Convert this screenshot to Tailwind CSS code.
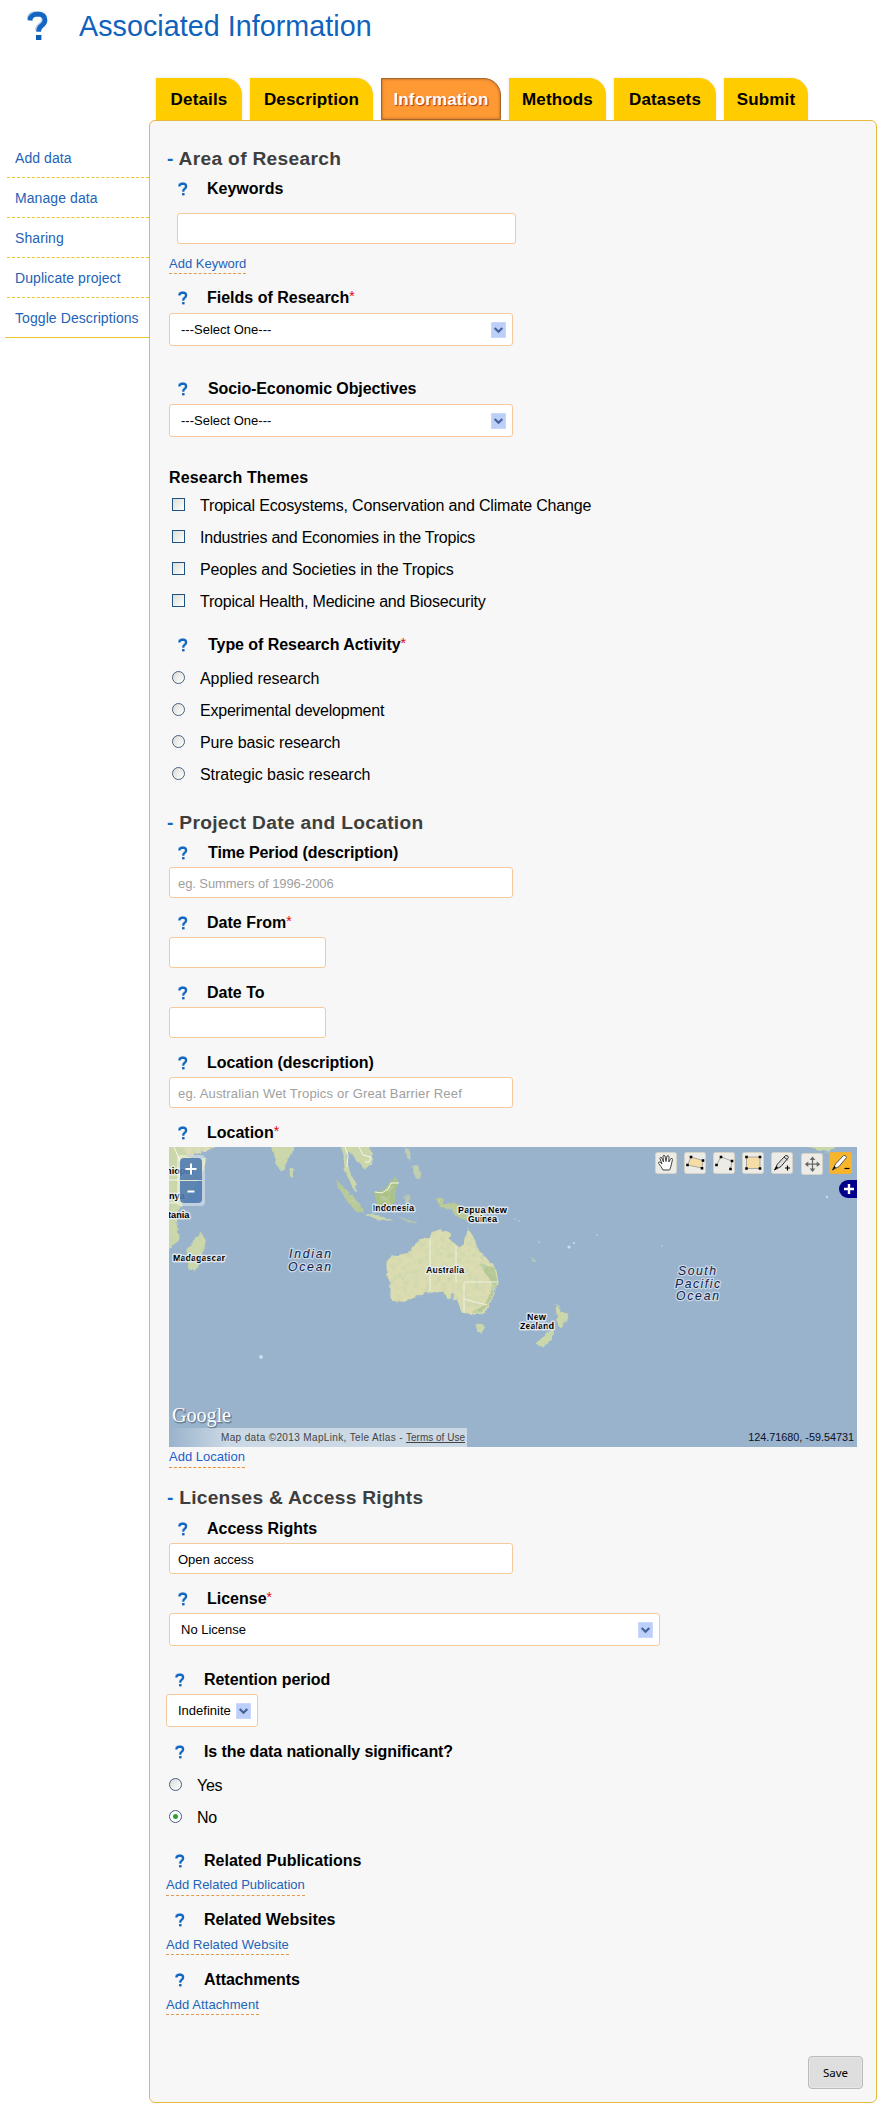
<!DOCTYPE html>
<html lang="en">
<head>
<meta charset="utf-8">
<title>Associated Information</title>
<script src="https://cdn.jsdelivr.net/npm/@tailwindcss/browser@4"></script>
</head>
<body class="bg-white font-['Liberation_Sans',Arial,sans-serif] text-base text-black">
<svg class="hidden">
  <defs>
    <symbol id="help" viewBox="0 0 22 30">
      <path d="M3 9.500 Q3.400 3.200 11 3.200 Q18 3.400 18 9 Q18 12.400 14.600 14.800 Q11.600 17 11.600 20.400" fill="none" stroke="#9fbfe0" stroke-width="4.400" transform="translate(-1.400,-1)" opacity=".7"/>
      <path d="M3 9.500 Q3.400 3.200 11 3.200 Q18 3.400 18 9 Q18 12.400 14.600 14.800 Q11.600 17 11.600 20.800" fill="none" stroke="#1466c4" stroke-width="4.800"/>
      <rect x="9" y="24" width="5.400" height="5" fill="#0f5cb5"/>
    </symbol>
    <symbol id="arrow" viewBox="0 0 15 16">
      <rect width="15" height="16" rx="1.500" fill="#bccff8"/>
      <rect x=".5" y=".5" width="14" height="15" rx="1" fill="none" stroke="#c9d8fc"/>
      <path d="M3.700 6 L7.500 9.800 L11.300 6" fill="none" stroke="#47619a" stroke-width="2.200"/>
    </symbol>
  </defs>
</svg>

<header class="flex h-[78px] items-start">
  <svg class="ml-[27px] mt-[11px] h-[30px] w-[22px]"><use href="#help"/></svg>
  <h1 class="ml-[30px] mt-[10px] text-[28.7px] leading-8 tracking-[0.04px] text-[#0f62bd]">Associated Information</h1>
</header>

<nav class="flex h-[42px] gap-2 pl-[156px] text-center text-[17px] font-bold leading-[43px] tracking-[0.15px]">
  <a class="w-[86px] rounded-tr-[17px] bg-[#ffcc00] shadow-[0_0_3px_#ddd]">Details</a>
  <a class="w-[123px] rounded-tr-[17px] bg-[#ffcc00] shadow-[0_0_3px_#ddd]">Description</a>
  <a class="w-[120px] rounded-tr-[17px] border border-[#a8652a] bg-[#ff9933] leading-[41px] text-white shadow-[inset_0_0_3px_#a8652a] [text-shadow:1px_1px_1px_#b03a10]">Information</a>
  <a class="w-[97px] rounded-tr-[17px] bg-[#ffcc00] shadow-[0_0_3px_#ddd]">Methods</a>
  <a class="w-[102px] rounded-tr-[17px] bg-[#ffcc00] shadow-[0_0_3px_#ddd]">Datasets</a>
  <a class="w-[84px] rounded-tr-[17px] bg-[#ffcc00] shadow-[0_0_3px_#ddd]">Submit</a>
</nav>

<div class="flex">
  <aside class="flex w-[149px] flex-col pl-[5px] pt-[18px] text-[14px] tracking-[0.08px] text-[#2363b8]">
    <a class="ml-0.5 h-10 border-b border-dashed border-[#ecc52e] pl-2 leading-[41px]">Add data</a>
    <a class="ml-0.5 h-10 border-b border-dashed border-[#ecc52e] pl-2 leading-[41px]">Manage data</a>
    <a class="ml-0.5 h-10 border-b border-dashed border-[#ecc52e] pl-2 leading-[41px]">Sharing</a>
    <a class="ml-0.5 h-10 border-b border-dashed border-[#ecc52e] pl-2 leading-[41px]">Duplicate project</a>
    <a class="h-10 border-b border-[#ecc52e] pl-2.5 leading-[41px]">Toggle Descriptions</a>
  </aside>

  <main class="flex h-[1983px] w-[728px] flex-col items-start rounded-[6px] border border-[#e9b93f] bg-[#f7f7f7] pl-4 pt-[26px]">
    <h2 class="ml-px h-6 text-[19.2px] font-bold leading-6 tracking-[0.3px] text-[#3e3e3e]"><span class="text-[#1565c0]">-</span> Area of Research</h2>
    <div class="mt-2 flex h-5 items-start font-bold leading-5"><svg class="ml-3 mt-[3px] h-[14px] w-[10px]"><use href="#help"/></svg><span class="ml-[19px]">Keywords</span></div>
    <div class="ml-[11px] mt-[14px] h-[31px] w-[339px] rounded-[3px] border border-[#f4ca9a] bg-white"></div>
    <a class="ml-[3px] mt-2.5 h-5 border-b border-dashed border-[#e59a4a] text-[13px] leading-[19px] text-[#2363b8]">Add Keyword</a>

    <div class="mt-[14px] flex h-5 items-start font-bold leading-5"><svg class="ml-3 mt-[3px] h-[14px] w-[10px]"><use href="#help"/></svg><span class="ml-[19px]">Fields of Research</span><span class="-mt-0.5 text-[14px] font-normal text-red-600">*</span></div>
    <div class="ml-[3px] mt-[5px] flex h-[33px] w-[344px] items-center justify-between rounded-[3px] border border-[#f4ca9a] bg-white pl-[11px] pr-[6px] text-[13px]"><span>---Select One---</span><svg class="h-4 w-[15px]"><use href="#arrow"/></svg></div>

    <div class="mt-[33px] flex h-5 items-start font-bold leading-5"><svg class="ml-3 mt-[3px] h-[14px] w-[10px]"><use href="#help"/></svg><span class="ml-5 tracking-[-0.1px]">Socio-Economic Objectives</span></div>
    <div class="ml-[3px] mt-[5px] flex h-[33px] w-[344px] items-center justify-between rounded-[3px] border border-[#f4ca9a] bg-white pl-[11px] pr-[6px] text-[13px]"><span>---Select One---</span><svg class="h-4 w-[15px]"><use href="#arrow"/></svg></div>

    <div class="ml-[3px] mt-[31px] h-5 font-bold leading-5 tracking-[0.16px]">Research Themes</div>
    <div class="ml-1.5 mt-0.5 flex flex-col">
      <label class="flex h-8 items-center leading-8"><span class="mb-[3px] size-[13px] border border-[#1d5281] bg-linear-to-br from-[#dcdcd7] to-white"></span><span class="ml-[15px] tracking-[-0.18px]">Tropical Ecosystems, Conservation and Climate Change</span></label>
      <label class="flex h-8 items-center leading-8"><span class="mb-[3px] size-[13px] border border-[#1d5281] bg-linear-to-br from-[#dcdcd7] to-white"></span><span class="ml-[15px] tracking-[-0.22px]">Industries and Economies in the Tropics</span></label>
      <label class="flex h-8 items-center leading-8"><span class="mb-[3px] size-[13px] border border-[#1d5281] bg-linear-to-br from-[#dcdcd7] to-white"></span><span class="ml-[15px] tracking-[-0.12px]">Peoples and Societies in the Tropics</span></label>
      <label class="flex h-8 items-center leading-8"><span class="mb-[3px] size-[13px] border border-[#1d5281] bg-linear-to-br from-[#dcdcd7] to-white"></span><span class="ml-[15px] tracking-[-0.2px]">Tropical Health, Medicine and Biosecurity</span></label>
    </div>

    <div class="mt-[17px] flex h-5 items-start font-bold leading-5"><svg class="ml-3 mt-[3px] h-[14px] w-[10px]"><use href="#help"/></svg><span class="ml-5 tracking-[-0.05px]">Type of Research Activity</span><span class="-mt-0.5 text-[14px] font-normal text-red-600">*</span></div>
    <div class="ml-1.5 mt-2 flex flex-col">
      <label class="flex h-8 items-center leading-8"><span class="mb-[3px] size-[13px] rounded-full border border-[#44617f] bg-linear-to-br from-[#dcdcd7] to-white"></span><span class="ml-[15px] tracking-[-0.05px]">Applied research</span></label>
      <label class="flex h-8 items-center leading-8"><span class="mb-[3px] size-[13px] rounded-full border border-[#44617f] bg-linear-to-br from-[#dcdcd7] to-white"></span><span class="ml-[15px] tracking-[-0.22px]">Experimental development</span></label>
      <label class="flex h-8 items-center leading-8"><span class="mb-[3px] size-[13px] rounded-full border border-[#44617f] bg-linear-to-br from-[#dcdcd7] to-white"></span><span class="ml-[15px] tracking-[-0.1px]">Pure basic research</span></label>
      <label class="flex h-8 items-center leading-8"><span class="mb-[3px] size-[13px] rounded-full border border-[#44617f] bg-linear-to-br from-[#dcdcd7] to-white"></span><span class="ml-[15px] tracking-[-0.05px]">Strategic basic research</span></label>
    </div>

    <h2 class="ml-px mt-5 h-6 text-[19.2px] font-bold leading-6 tracking-[0.3px] text-[#3e3e3e]"><span class="text-[#1565c0]">-</span> Project Date and Location</h2>
    <div class="mt-2 flex h-5 items-start font-bold leading-5"><svg class="ml-3 mt-[3px] h-[14px] w-[10px]"><use href="#help"/></svg><span class="ml-5 tracking-[-0.1px]">Time Period (description)</span></div>
    <div class="ml-[3px] mt-1 flex h-[31px] w-[344px] items-center rounded-[3px] border border-[#f4ca9a] bg-white pl-2 pt-0.5 text-[13px] tracking-[-0.08px] text-[#a0a0a0]">eg. Summers of 1996-2006</div>
    <div class="mt-[15px] flex h-5 items-start font-bold leading-5"><svg class="ml-3 mt-[3px] h-[14px] w-[10px]"><use href="#help"/></svg><span class="ml-[19px]">Date From</span><span class="-mt-0.5 text-[14px] font-normal text-red-600">*</span></div>
    <div class="ml-[3px] mt-1 h-[31px] w-[157px] rounded-[3px] border border-[#f4ca9a] bg-white"></div>
    <div class="mt-[15px] flex h-5 items-start font-bold leading-5"><svg class="ml-3 mt-[3px] h-[14px] w-[10px]"><use href="#help"/></svg><span class="ml-[19px]">Date To</span></div>
    <div class="ml-[3px] mt-1 h-[31px] w-[157px] rounded-[3px] border border-[#f4ca9a] bg-white"></div>
    <div class="mt-[15px] flex h-5 items-start font-bold leading-5"><svg class="ml-3 mt-[3px] h-[14px] w-[10px]"><use href="#help"/></svg><span class="ml-[19px] tracking-[-0.06px]">Location (description)</span></div>
    <div class="ml-[3px] mt-1 flex h-[31px] w-[344px] items-center rounded-[3px] border border-[#f4ca9a] bg-white pl-2 pt-0.5 text-[13px] tracking-[0.17px] text-[#a0a0a0]">eg. Australian Wet Tropics or Great Barrier Reef</div>
    <div class="mt-[15px] flex h-5 items-start font-bold leading-5"><svg class="ml-3 mt-[3px] h-[14px] w-[10px]"><use href="#help"/></svg><span class="ml-[19px]">Location</span><span class="-mt-0.5 text-[14px] font-normal text-red-600">*</span></div>

    <div class="relative ml-[3px] mt-1 h-[300px] w-[688px] shrink-0 overflow-hidden bg-[#99b3cc]">
      <svg class="block h-[300px] w-[688px]" viewBox="0 0 688 300" font-family="'Liberation Sans',Arial,sans-serif">
        <defs>
          <filter id="terrain" x="-5%" y="-5%" width="110%" height="110%">
            <feTurbulence type="fractalNoise" baseFrequency=".18" numOctaves="3" seed="4" result="n"/>
            <feDisplacementMap in="SourceGraphic" in2="n" scale="4" xChannelSelector="R" yChannelSelector="G" result="d"/>
            <feColorMatrix in="n" type="matrix" values="0 0 0 0 .55  0 0 0 0 .66  0 0 0 0 .42  0 1.8 0 0 -.8" result="g"/>
            <feComposite in="g" in2="d" operator="in" result="gg"/>
            <feMerge><feMergeNode in="d"/><feMergeNode in="gg"/></feMerge>
          </filter>
        </defs>
        <g filter="url(#terrain)" fill="#ccd8aa">
          <g transform="translate(-1.500,-.5)">
          <path d="M-4 -4 H18 L18 9 Q34 14 39 11 Q36 34 22 47 Q12 62 8 68 Q12 84 12 92 L0 103 L-4 103 Z"/>
          <path d="M16 -4 H50 L47 1 L37 5 L24 9 L18 8 Z" fill="#dddcb9"/>
          <path d="M34 85 L38 96 L33 112 L28 124 L21 123 L20 103 Z"/>
          <path d="M104 -3 H128 L124 8 L119 14 L117 24 L114 26 L109 18 Z"/>
          <path d="M122 21 L127 24 L125 32 L122 30 Z"/>
          <path d="M172 -3 L176 8 L177 22 L181 33 L188 46 L190 45 L187 34 L181 24 L179 12 L182 5 L192 17 L197 23 L205 16 L204 6 L201 -3 Z"/>
          <path d="M167 33 L178 42 L193 58 L196 66 L190 66 L180 56 Z" fill="#b7c998"/>
          <path d="M196 67 L212 69 L226 74 L212 74 Z"/>
          <path d="M206 45 L214 45 L220 39 L227 30 L231 34 L228 45 L227 57 L220 62 L210 58 Z" fill="#a9c184"/>
          <path d="M237 0 L242 4 L243 14 L240 12 Z M245 19 L250 20 L254 26 L252 33 L247 31 Z" fill="#c0cdb0"/>
          <path d="M268 51 L276 52 L276 58 L286 56 L299 61 L314 66 L322 77 L305 74 L292 72 L284 64 L272 60 Z" fill="#b9c997"/>
          <path d="M230 70 L242 74 L252 75 L242 77 Z M236 48 L243 48 L240 60 L237 58 Z" fill="#b3c4b4"/>
          <path d="M224 110 L219 115 L219 126 L223 140 L223 151 L229 156 L245 152 L259 146 L275 146 L281 152 L287 147 L285 155 L290 154 L294 166 L307 168 L317 167 L324 154 L331 136 L329 124 L317 109 L309 102 L307 92 L300 82 L297 97 L292 101 L281 92 L284 86 L272 83 L264 86 L262 92 L255 91 L244 101 L242 106 Z" fill="#dbdcb0"/>
          <path d="M312 118 L327 121 L330 136 L324 152 L315 166 L304 166 L318 158 L326 138 Z" fill="#b5c894"/>
          <path d="M308 177 L317 178 L314 187 L310 186 Z"/>
          <path d="M388 157 L394 165 L402 168 L399 175 L392 181 L390 176 Z M388 180 L378 188 L368 197 L376 201 L384 192 Z"/>
          <path d="M362 110 L369 114 L366 114 Z"/>
          <path d="M633 -3 H676 L662 5 L650 4 Z"/>
          </g>
        </g>
        <path d="M176 0 L179 8 L178 20 M190 0 L194 8 L202 10 L200 15 L196 15 M206 45 L213 46 L219 42 L222 36 L230 36 M0 33 H10 M0 56 H9 M5 0 L12 16" fill="none" stroke="#f5f6ec"/>
        <path d="M261 91 V144 M287 99 V135 M295 136 V166 M295 135 H329 M295 152 L306 155 L318 158" fill="none" stroke="#f5f6ec" stroke-opacity=".8"/>
        <g fill="#dfe9f0" fill-opacity=".75"><circle cx="92" cy="210" r="2"/><circle cx="400" cy="100" r="1.600"/><circle cx="405" cy="96" r="1"/><circle cx="370" cy="95" r=".8"/><circle cx="428" cy="88" r=".8"/><circle cx="493" cy="99" r=".7"/><circle cx="658" cy="50" r="1.200"/><circle cx="346" cy="72" r=".7"/><circle cx="350" cy="74" r=".7"/></g>
        <g font-size="9.200" font-weight="bold" fill="#000" stroke="#e6edf2" stroke-width="3" stroke-linejoin="round" paint-order="stroke" stroke-opacity=".85">
          <text x="-6" y="27">thiopia</text>
          <text x="0" y="52">nya</text>
          <text x="-1" y="71">tania</text>
          <text x="4" y="114" textLength="52">Madagascar</text>
          <text x="204" y="64" textLength="41">Indonesia</text>
          <text x="289" y="66" textLength="49">Papua New</text>
          <text x="299" y="75" textLength="29">Guinea</text>
          <text x="257" y="126" textLength="38">Australia</text>
          <text x="358" y="173" textLength="19">New</text>
          <text x="351" y="182" textLength="34">Zealand</text>
        </g>
        <g font-size="12.200" font-style="italic" fill="#17224a" stroke="#d3e0ec" stroke-width="2.600" stroke-linejoin="round" paint-order="stroke" stroke-opacity=".85">
          <text x="120" y="111" textLength="42">Indian</text>
          <text x="119" y="124" textLength="43">Ocean</text>
          <text x="509" y="128" textLength="38">South</text>
          <text x="506" y="141" textLength="45">Pacific</text>
          <text x="507" y="153" textLength="43">Ocean</text>
        </g>
        <text x="3" y="275" font-family="'Liberation Serif',serif" font-size="20" textLength="59" lengthAdjust="spacingAndGlyphs" fill="#5c6f86" stroke="#5c6f86" stroke-width="1.200" opacity=".7" transform="translate(.8,.8)">Google</text>
        <text x="3" y="275" font-family="'Liberation Serif',serif" font-size="20" textLength="59" lengthAdjust="spacingAndGlyphs" fill="#fff">Google</text>
      </svg>

      <div class="absolute left-2 top-2 h-[51px] w-7 rounded-[4px] bg-white/40 p-[3px]">
        <div class="flex h-full flex-col gap-px">
          <div class="flex flex-1 items-center justify-center rounded-t-[4px] bg-[#3f6ea9]/80"><svg class="h-3 w-3" viewBox="0 0 12 12"><path d="M6 .5V11.500M.5 6H11.500" stroke="#fff" stroke-width="2"/></svg></div>
          <div class="flex flex-1 items-center justify-center rounded-b-[4px] bg-[#3f6ea9]/80"><svg class="h-3 w-3" viewBox="0 0 12 12"><path d="M2.500 5.500H9.500" stroke="#fff" stroke-width="2"/></svg></div>
        </div>
      </div>

      <div class="absolute left-[486px] top-[5px] flex gap-[7px]">
        <svg class="h-[22px] w-[22px]" viewBox="0 0 22 22"><rect x=".5" y=".5" width="21" height="21" rx="2" fill="#ecebe5" stroke="#d5d2c8"/><path d="M8 18 Q6 14 3.700 11.500 Q3 10 4.500 10 Q6 10.500 7 12 L5 6.500 Q5 5 6.500 5.500 L8.500 10 L8 4 Q8.700 2.500 10 4 L11 9.500 L12 4 Q13 3 14 4.500 L13.800 10 L16 6.500 Q17.500 6 17.500 7.500 L16 14 Q15.500 16 14.500 18 Z" fill="#fff" stroke="#444" stroke-width="1"/></svg>
        <svg class="h-[22px] w-[22px]" viewBox="0 0 22 22"><rect x=".5" y=".5" width="21" height="21" rx="2" fill="#ecebe5" stroke="#d5d2c8"/><path d="M7 5 L19 8.500 L18 16 L3.500 13 Z" fill="#f6dca5" stroke="#999" stroke-width=".8"/><path d="M5.700 3.700h2.600v2.600h-2.600zM17.700 7.200h2.600v2.600h-2.600zM16.700 15h2.600v2.600h-2.600zM2.200 11.700h2.600v2.600h-2.600z"/></svg>
        <svg class="h-[22px] w-[22px]" viewBox="0 0 22 22"><rect x=".5" y=".5" width="21" height="21" rx="2" fill="#ecebe5" stroke="#d5d2c8"/><path d="M3.500 13 L8 5 L19 9 L17.500 17" fill="none" stroke="#999" stroke-width=".8"/><path d="M6.700 3.700h2.600v2.600h-2.600zM17.700 7.700h2.600v2.600h-2.600zM16.200 15.700h2.600v2.600h-2.600zM2.200 11.700h2.600v2.600h-2.600z"/></svg>
        <svg class="h-[22px] w-[22px]" viewBox="0 0 22 22"><rect x=".5" y=".5" width="21" height="21" rx="2" fill="#ecebe5" stroke="#d5d2c8"/><rect x="4.500" y="5" width="13.500" height="11.500" fill="#f6dca5" stroke="#999" stroke-width=".8"/><path d="M3.200 3.700h2.600v2.600h-2.600zM16.700 3.700h2.600v2.600h-2.600zM3.200 15.200h2.600v2.600h-2.600zM16.700 15.200h2.600v2.600h-2.600z"/></svg>
        <svg class="h-[22px] w-[22px]" viewBox="0 0 22 22"><rect x=".5" y=".5" width="21" height="21" rx="2" fill="#ecebe5" stroke="#d5d2c8"/><path d="M3.500 18 L6.500 12 L14.500 3.500 Q17 3 17.500 5.500 L10 14.500 Z" fill="#ddd" stroke="#333"/><path d="M3 18.500 L7 15.500 L5.500 14 Z"/><path d="M13 5 L16.500 8" stroke="#333"/><path d="M16.500 13.500v5M14 16h5" stroke="#000" stroke-width="1.200"/></svg>
        <svg class="mt-px ml-px h-[22px] w-[22px]" viewBox="0 0 22 22"><rect x=".5" y=".5" width="21" height="21" rx="2" fill="#ecebe5" stroke="#d5d2c8"/><path d="M11.500 5V17.500M5 11.200H18" stroke="#666" stroke-width="1.200"/><path d="M11.500 3.500l2.800 3.500h-5.600zM11.500 19l2.800-3.500h-5.600zM3.800 11.200l3.500-2.800v5.600zM19.200 11.200l-3.500-2.800v5.600z" fill="#666"/></svg>
        <svg class="-ml-px h-[22px] w-[23px]" viewBox="0 0 23 22"><rect x=".5" y=".5" width="22" height="21" rx="2" fill="#f7b52b" stroke="#eeb23a"/><path d="M3.500 18 L6.500 12 L14.500 3.500 Q17 3 17.500 5.500 L10 14.500 Z" fill="#fff" stroke="#555"/><path d="M3 18.500 L7 15.500 L5.500 14 Z"/><path d="M15.500 16.500h5" stroke="#000" stroke-width="1.200"/></svg>
      </div>
      <div class="absolute right-0 top-[33px] flex h-[18px] w-[18px] items-center justify-center rounded-l-[9px] bg-[#00008b]"><svg class="ml-0.5 h-[10px] w-[10px]" viewBox="0 0 10 10"><path d="M5 0V10M0 5H10" stroke="#fff" stroke-width="2.400"/></svg></div>
      <div class="absolute bottom-0 left-0 h-[19px] w-[298px] whitespace-nowrap bg-linear-to-r from-white/0 to-white/50 to-20% pl-[52px] text-[10px] leading-[19px] text-[#444]"><span class="tracking-[0.36px]">Map data ©2013 MapLink, Tele Atlas - </span><span class="underline">Terms of Use</span></div>
      <div class="absolute bottom-[3px] right-[3px] text-[10.8px] leading-[14px] text-[#0b0f22]">124.71680, -59.54731</div>
    </div>
    <a class="ml-[3px] h-[21px] border-b border-dashed border-[#f08a2c] text-[13px] leading-[19px] text-[#1a5fd0]">Add Location</a>

    <h2 class="ml-px mt-[18px] h-6 text-[19.2px] font-bold leading-6 tracking-[0.25px] text-[#3e3e3e]"><span class="text-[#1565c0]">-</span> Licenses &amp; Access Rights</h2>
    <div class="mt-[9px] flex h-5 items-start font-bold leading-5"><svg class="ml-3 mt-[3px] h-[14px] w-[10px]"><use href="#help"/></svg><span class="ml-[19px]">Access Rights</span></div>
    <div class="ml-[3px] mt-1 flex h-[31px] w-[344px] items-center rounded-[3px] border border-[#f4ca9a] bg-white pl-2 pt-0.5 text-[13px]">Open access</div>
    <div class="mt-[15px] flex h-5 items-start font-bold leading-5"><svg class="ml-3 mt-[3px] h-[14px] w-[10px]"><use href="#help"/></svg><span class="ml-[19px]">License</span><span class="-mt-0.5 text-[14px] font-normal text-red-600">*</span></div>
    <div class="ml-[3px] mt-1 flex h-[33px] w-[491px] items-center justify-between rounded-[3px] border border-[#f4ca9a] bg-white pl-[11px] pr-[6px] text-[13px]"><span>No License</span><svg class="h-4 w-[15px]"><use href="#arrow"/></svg></div>

    <div class="mt-6 flex h-5 items-start font-bold leading-5"><svg class="ml-[9px] mt-[3px] h-[14px] w-[10px]"><use href="#help"/></svg><span class="ml-[19px] tracking-[-0.05px]">Retention period</span></div>
    <div class="mt-1 flex h-[33px] w-[92px] items-center justify-between rounded-[3px] border border-[#f4ca9a] bg-white pl-[11px] pr-[6px] text-[13px]"><span>Indefinite</span><svg class="h-4 w-[15px]"><use href="#arrow"/></svg></div>
    <div class="mt-[15px] flex h-5 items-start font-bold leading-5"><svg class="ml-[9px] mt-[3px] h-[14px] w-[10px]"><use href="#help"/></svg><span class="ml-[19px] tracking-[-0.1px]">Is the data nationally significant?</span></div>
    <div class="ml-[3px] mt-2 flex flex-col">
      <label class="flex h-8 items-center leading-8"><span class="mb-[3px] size-[13px] rounded-full border border-[#44617f] bg-linear-to-br from-[#dcdcd7] to-white"></span><span class="ml-[15px] tracking-[-0.3px]">Yes</span></label>
      <label class="flex h-8 items-center leading-8"><span class="mb-[3px] flex size-[13px] items-center justify-center rounded-full border border-[#44617f] bg-white"><span class="size-[5px] rounded-full bg-[#2fa32b]"></span></span><span class="ml-[15px] tracking-[-0.3px]">No</span></label>
    </div>
    <div class="mt-[17px] flex h-5 items-start font-bold leading-5"><svg class="ml-[9px] mt-[3px] h-[14px] w-[10px]"><use href="#help"/></svg><span class="ml-[19px]">Related Publications</span></div>
    <a class="mt-1 h-[21px] border-b border-dashed border-[#e59a4a] text-[13px] leading-[19px] text-[#2363b8]">Add Related Publication</a>
    <div class="mt-[14px] flex h-5 items-start font-bold leading-5"><svg class="ml-[9px] mt-[3px] h-[14px] w-[10px]"><use href="#help"/></svg><span class="ml-[19px] tracking-[-0.05px]">Related Websites</span></div>
    <a class="mt-[5px] h-5 border-b border-dashed border-[#e59a4a] text-[13px] leading-[19px] tracking-[0.05px] text-[#2363b8]">Add Related Website</a>
    <div class="mt-[15px] flex h-5 items-start font-bold leading-5"><svg class="ml-[9px] mt-[3px] h-[14px] w-[10px]"><use href="#help"/></svg><span class="ml-[19px] tracking-[-0.1px]">Attachments</span></div>
    <a class="mt-[5px] h-5 border-b border-dashed border-[#e59a4a] text-[13px] leading-[19px] tracking-[0.08px] text-[#2363b8]">Add Attachment</a>
    <button class="ml-[642px] mt-[41px] h-[33px] w-[55px] rounded-[4px] border border-[#b9bcbd] bg-[#dedede] font-['Noto_Sans',sans-serif] text-[11.5px] shadow-[inset_0_0_0_1px_#e6e6e6]">Save</button>
  </main>
</div>
</body>
</html>
